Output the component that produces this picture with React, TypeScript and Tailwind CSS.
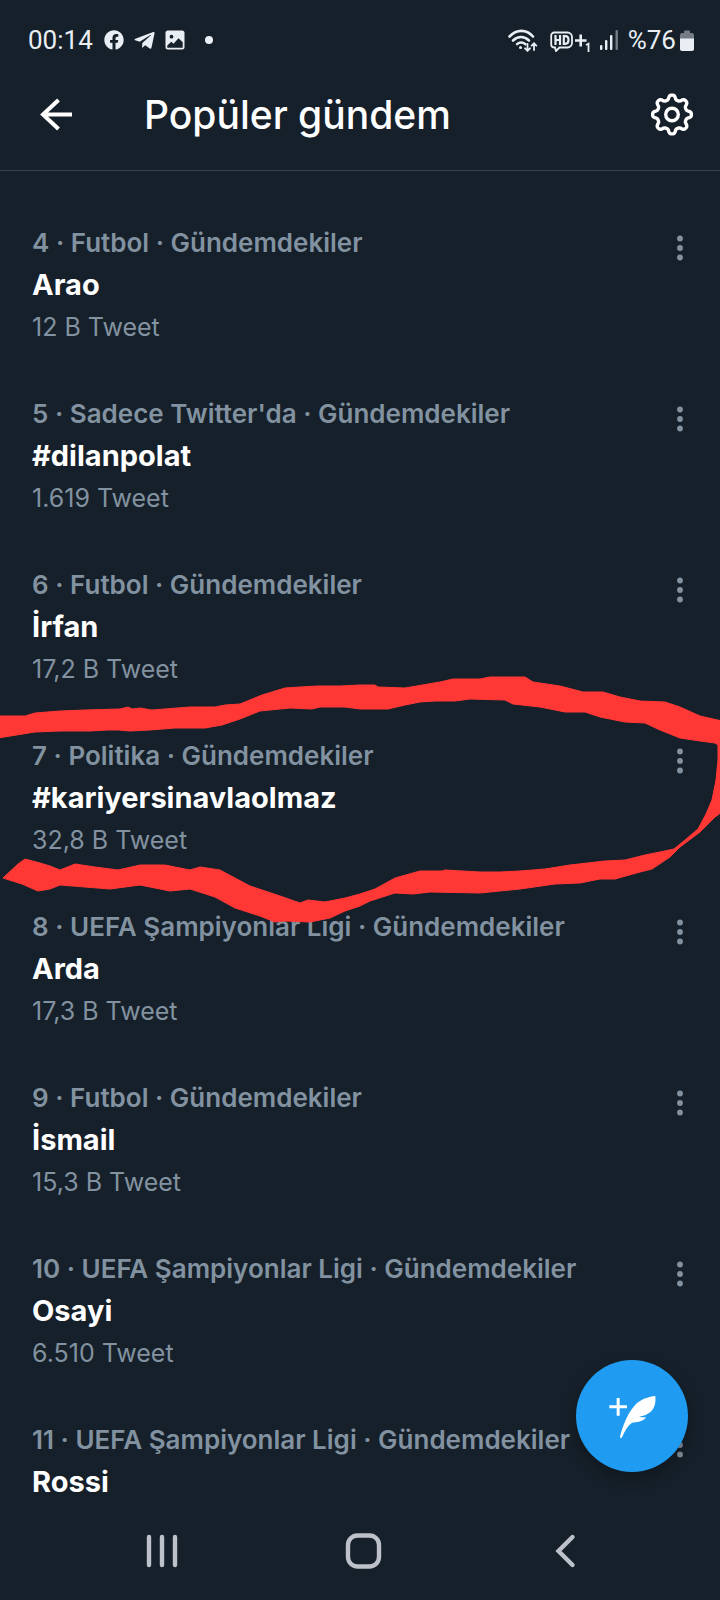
import { FaFacebook, FaTelegramPlane } from "react-icons/fa";

type Trend = { rank: number; topic: string; name: string; count?: string };

const trends: Trend[] = [
  { rank: 4, topic: "Futbol", name: "Arao", count: "12 B Tweet" },
  { rank: 5, topic: "Sadece Twitter'da", name: "#dilanpolat", count: "1.619 Tweet" },
  { rank: 6, topic: "Futbol", name: "İrfan", count: "17,2 B Tweet" },
  { rank: 7, topic: "Politika", name: "#kariyersinavlaolmaz", count: "32,8 B Tweet" },
  { rank: 8, topic: "UEFA Şampiyonlar Ligi", name: "Arda", count: "17,3 B Tweet" },
  { rank: 9, topic: "Futbol", name: "İsmail", count: "15,3 B Tweet" },
  { rank: 10, topic: "UEFA Şampiyonlar Ligi", name: "Osayi", count: "6.510 Tweet" },
  { rank: 11, topic: "UEFA Şampiyonlar Ligi", name: "Rossi" },
];

function gearPath(cx: number, cy: number, base: number, depth: number) {
  const steps = 240;
  const points = Array.from({ length: steps }, (_, i) => {
    const a = (i / steps) * Math.PI * 2;
    const wave = Math.tanh(1.6 * Math.cos(8 * a) - 0.1);
    const r = base + depth * wave;
    return `${(cx + r * Math.sin(a)).toFixed(2)} ${(cy - r * Math.cos(a)).toFixed(2)}`;
  });
  return `M${points.join("L")}Z`;
}

function StatusBar() {
  return (
    <div className="flex h-20 items-center justify-between pr-[26px] pl-7 font-[Roboto,sans-serif] text-[26px] leading-8 text-[#e9eef4]">
      <div className="flex items-center">
        <span>00:14</span>
        <FaFacebook className="ml-[11px] size-5" />
        <FaTelegramPlane className="ml-[9px] size-[23px]" />
        <svg viewBox="0 0 20 20" className="ml-[9px] size-5" aria-hidden="true">
          <path
            fillRule="evenodd"
            fill="currentColor"
            d="M3 .5h14A2.500 2.500 0 0 1 19.500 3v14a2.500 2.500 0 0 1-2.500 2.500H3A2.500 2.500 0 0 1 .5 17V3A2.500 2.500 0 0 1 3 .5ZM6.500 4.800a1.900 1.900 0 1 0 0 3.800 1.900 1.900 0 0 0 0-3.800ZM2.300 15.500v2.200h15.400v-5.400l-4.200-4-5 5.400-2.200-2Z"
          />
        </svg>
        <span className="ml-5 size-2 rounded-full bg-current" />
      </div>
      <div className="flex items-center">
        <svg viewBox="0 0 30 24" className="h-6 w-[30px]" fill="none" stroke="currentColor" strokeLinecap="round" aria-hidden="true">
          <path d="M1.500 8.500C8.500 1 18.500 1 25 8.500" strokeWidth="2.600" />
          <path d="M5 12.500c5-4.500 11-4.500 16 0" strokeWidth="2.600" />
          <path d="M9 16.200c2.500-2.200 5.500-2.400 8.500 0" strokeWidth="2.400" />
          <circle cx="12.500" cy="19.500" r="1.500" fill="currentColor" stroke="none" />
          <path d="M19.500 16v6.500M17 20.300l2.500 2.500 2.500-2.500M26 22v-6.500M23.700 17.700l2.300-2.400 2.300 2.400" strokeWidth="1.800" />
        </svg>
        <svg viewBox="0 0 42 24" className="ml-3 h-6 w-[42px]" fill="none" stroke="currentColor" aria-hidden="true">
          <path d="M5 19.500H4A3 3 0 0 1 1.200 16.500V7.500A3 3 0 0 1 4.200 4.500H17.500A4.500 4.500 0 0 1 22 9v6a4.500 4.500 0 0 1-4.500 4.500H9.500L6 23Z" strokeWidth="1.800" />
          <path d="M5.500 7v10M10 7v10M5.500 12h4.500M13.800 8.200v7.600h1.500c2.500 0 3.200-1.500 3.200-3.800s-.7-3.800-3.200-3.800Z" strokeWidth="2.200" />
          <path d="M25 12.500h11.500M30.700 6.500v12" strokeWidth="2.600" />
          <path d="M36 17l2.500-1.200V24" strokeWidth="1.800" />
        </svg>
        <svg viewBox="0 0 20 20" className="ml-2 size-5" fill="currentColor" aria-hidden="true">
          <rect x="0" y="15" width="2.400" height="5" rx="1" />
          <rect x="5" y="10" width="2.400" height="10" rx="1" />
          <rect x="10" y="5" width="2.400" height="15" rx="1" />
          <rect x="15.500" y="0" width="2.400" height="20" rx="1" opacity=".45" />
        </svg>
        <span className="ml-2">%76</span>
        <svg viewBox="0 0 14 21" className="ml-1 h-[21px] w-3.5" fill="currentColor" aria-hidden="true">
          <path d="M4 1.500A1 1 0 0 1 5 .5h4a1 1 0 0 1 1 1V3h2a2 2 0 0 1 2 2v4H0V5a2 2 0 0 1 2-2h2Z" opacity=".45" />
          <path d="M0 8.500h14V19a2 2 0 0 1-2 2H2a2 2 0 0 1-2-2Z" />
        </svg>
      </div>
    </div>
  );
}

function Header() {
  return (
    <header className="flex h-[91px] items-start border-b border-[#36414b] pr-[26px] pl-9 text-white">
      <button type="button" aria-label="Geri" className="mt-3.5 flex size-10 items-center justify-center">
        <svg viewBox="0 0 40 40" className="size-10" fill="none" stroke="currentColor" strokeWidth="4" aria-hidden="true">
          <path d="M36 20.500H7M22.500 6 7 20.500 22.500 35" />
        </svg>
      </button>
      <h1 className="ml-[68px] flex-1 text-[39px] leading-[70px] font-medium">Popüler gündem</h1>
      <button type="button" aria-label="Ayarlar" className="mt-3 flex size-11 items-center justify-center">
        <svg viewBox="0 0 44 44" className="size-11" fill="none" stroke="currentColor" strokeWidth="3.400" strokeLinejoin="round" aria-hidden="true">
          <path d={gearPath(22, 22.5, 17.2, 2.4)} />
          <circle cx="22" cy="22.500" r="6.300" />
        </svg>
      </button>
    </header>
  );
}

function TrendRow({ trend }: { trend: Trend }) {
  return (
    <li className="flex items-start justify-between pr-[30px] pl-8">
      <div className="text-[25px] leading-[42px] text-[#8292a0]">
        <p className="text-[26px] leading-[42px] font-semibold">
          {trend.rank} · {trend.topic} · Gündemdekiler
        </p>
        <h2 className="text-[29px] leading-[42px] font-bold text-white">{trend.name}</h2>
        {trend.count && <p>{trend.count}</p>}
      </div>
      <button type="button" aria-label={`${trend.name} seçenekleri`} className="mt-2.5 text-[#8292a0]">
        <svg viewBox="0 0 20 32" className="h-8 w-5" fill="currentColor" aria-hidden="true">
          <circle cx="10" cy="6.500" r="2.900" />
          <circle cx="10" cy="16" r="2.900" />
          <circle cx="10" cy="25.500" r="2.900" />
        </svg>
      </button>
    </li>
  );
}

function MarkerStroke() {
  return (
    <svg viewBox="0 660 720 280" className="pointer-events-none absolute inset-x-0 top-[489px] w-full" aria-hidden="true">
      <path
        fill="#ff3836"
        stroke="#ff3836"
        strokeWidth="1"
        strokeLinejoin="round"
        d="M-2 716 25 716 35 713 60 711 85 710 120 709 128 707 132 709 140 708 152 710 190 707 215 707 225 705 240 704 262 695 285 688 300 687 318 686 325 686 340 686 360 685 375 685 378 687 405 688 440 682 453 679 480 679 490 677 525 677 533 682 560 686 583 692 603 692 620 697 640 701 665 702 680 707 700 716 722 721V812L715 817 700 832 680 847 670 857 652 869 640 872 615 879 600 879 580 883 555 884 520 889 480 893 430 892 413 894 395 893 370 901 360 906 345 911 330 918 310 922 285 921 275 922 260 916 235 908 215 897 190 889 170 891 140 885 110 889 60 885 50 889 38 891 22 884 3 878 18 864 25 859 40 863 50 866 60 870 75 864 95 867 118 870 140 865 165 865 190 870 200 867 220 870 250 886 280 896 300 903 308 900 325 902 345 898 360 894 375 889 395 878 420 871 442 871 445 870 480 872 500 872 520 871 545 869 570 865 605 861 625 860 645 855 660 852 674 849 685 840 698 829 706 814 712 800 716 780 718 760 718 745 715 743 700 741 680 738 660 730 645 723 625 722 600 717 585 712 565 712 540 707 513 704 505 700 470 699 455 701 435 701 420 702 405 705 388 709 360 709 345 707 320 707 312 709 290 708 260 711 240 719 222 725 205 728 175 728 150 730 130 731 118 730 108 730 90 731 60 731 35 732-2 738Z"
      />
    </svg>
  );
}

function NavBar() {
  return (
    <nav className="mt-auto flex h-[97px] items-center justify-between px-[138px] pb-0.5 text-[#bdc1c9]">
      <button type="button" aria-label="Son uygulamalar">
        <svg viewBox="0 0 48 40" className="h-10 w-12" stroke="currentColor" strokeWidth="4.400" strokeLinecap="round" aria-hidden="true">
          <path d="M11 6v28M24 6v28M37 6v28" />
        </svg>
      </button>
      <button type="button" aria-label="Ana ekran">
        <svg viewBox="0 0 40 40" className="size-10" fill="none" stroke="currentColor" strokeWidth="4.400" aria-hidden="true">
          <rect x="4" y="4.500" width="31" height="31" rx="9.500" />
        </svg>
      </button>
      <button type="button" aria-label="Geri dön">
        <svg viewBox="0 0 40 40" className="size-10" fill="none" stroke="currentColor" strokeWidth="4.400" strokeLinecap="round" aria-hidden="true">
          <path d="M30.500 6 16.500 20 30.500 34" />
        </svg>
      </button>
    </nav>
  );
}

export default function App() {
  return (
    <div className="relative flex min-h-screen flex-col bg-[#16202a] font-[Inter,sans-serif]">
      <StatusBar />
      <Header />
      <main className="relative">
        <ul className="flex flex-col gap-[45px] pt-[51px]">
          {trends.map((trend) => (
            <TrendRow key={trend.rank} trend={trend} />
          ))}
        </ul>
        <MarkerStroke />
      </main>
      <NavBar />
      <button
        type="button"
        aria-label="Tweet oluştur"
        className="absolute right-8 bottom-32 flex size-28 items-center justify-center rounded-full bg-[#1f9bf1] text-white shadow-[0_6px_14px_rgba(0,0,0,0.3)]"
      >
        <svg viewBox="0 0 168 168" className="size-14" fill="currentColor" aria-hidden="true">
          <path d="M38 30h9v22h22v9H47v22h-9V61H16v-9h22Z" />
          <path d="M154 24C132 26 110 34 94 50 72 74 58 108 48 146c0 4 4 6 6 2 8-18 16-34 30-44 14-2 34-2 42-17-6 2-14 2-20-2 12 0 26-6 36-15 10-12 14-26 12-46Z" />
        </svg>
      </button>
    </div>
  );
}
